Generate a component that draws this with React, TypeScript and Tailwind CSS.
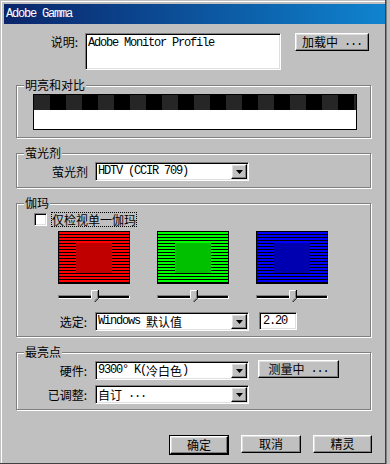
import React from "react";

const cjk = "font-['Noto_Sans_CJK_SC',sans-serif] text-[12px]";
const mono = "font-['Liberation_Mono','Noto_Sans_CJK_SC',monospace] text-[12px] tracking-[-1.2px]";

const raised =
  "bg-[#c0c0c0] border border-t-white border-l-white border-r-black border-b-black shadow-[inset_-1px_-1px_0_#808080,inset_1px_1px_0_#dfdfdf]";
const sunken =
  "bg-white border border-t-[#808080] border-l-[#808080] border-r-white border-b-white shadow-[inset_1px_1px_0_#000,inset_-1px_-1px_0_#dfdfdf]";

function Group({ title, className, children }: { title: string; className: string; children?: React.ReactNode }) {
  return (
    <div
      className={`relative ml-[12px] w-[355px] border border-[#808080] shadow-[inset_1px_1px_0_#fff,1px_1px_0_#fff] ${className}`}
    >
      <span className={`absolute left-[7px] top-[-10px] bg-[#c0c0c0] px-[1px] leading-[18px] text-black ${cjk}`}>
        {title}
      </span>
      {children}
    </div>
  );
}

function Button({ children, className = "" }: { children: React.ReactNode; className?: string }) {
  return (
    <div className={`flex h-[18px] items-center justify-center leading-[16px] text-black ${raised} ${className}`}>
      {children}
    </div>
  );
}

function Select({ children }: { children: React.ReactNode }) {
  return (
    <div className={`flex h-[19px] w-[154px] p-[1px] ${sunken}`}>
      <div className="flex flex-1 items-center overflow-hidden pl-[1px] leading-[15px] text-black">{children}</div>
      <div className={`flex w-[16px] items-center justify-center ${raised}`}>
        <svg width="7" height="4" viewBox="0 0 7 4">
          <path d="M0 0H7L3.5 4Z" fill="#000" />
        </svg>
      </div>
    </div>
  );
}

function Label({ text, w }: { text: string; w: string }) {
  return <div className={`${w} text-right leading-[19px] text-black ${cjk}`}>{text}</div>;
}

// gamma test patch: fine stripes around a solid middle
function Swatch({ line, inner }: { line: string; inner: string }) {
  const rows = [];
  for (let y = 1; y < 52; y += 3) {
    rows.push(<rect key={y} x="1" y={y + 2} width="70" height="1" fill="#000" />);
  }
  return (
    <svg width="72" height="53" viewBox="0 0 72 53" shapeRendering="crispEdges">
      <rect x="0" y="0" width="72" height="53" fill="#000" />
      <rect x="1" y="1" width="70" height="51" fill={line} />
      {rows}
      <rect x="18" y="12" width="36" height="30" fill={inner} />
    </svg>
  );
}

function Slider() {
  return (
    <div className="relative h-[12px] w-[72px]">
      <div className="mt-[5px] h-[4px] border border-t-[#808080] border-l-[#808080] border-r-white border-b-white bg-black" />
      <svg className="absolute left-[33px] top-0" width="8" height="12" viewBox="0 0 8 12">
        <path d="M0 0H7V8L3.5 11.5L0 8Z" fill="#c0c0c0" />
        <path d="M0.5 8V0.5H6.5" stroke="#fff" fill="none" />
        <path d="M7.5 0V8.2L3.7 12" stroke="#000" fill="none" />
        <path d="M6.5 1V7.8L3.6 10.8" stroke="#808080" fill="none" />
      </svg>
    </div>
  );
}

export default function App() {
  return (
    <div className="flex h-[464px] w-[390px] overflow-hidden bg-[#c0c0c0]">
      <div className="flex h-[464px] w-[386px] flex-col pl-[4px] pr-[1px] pt-[4px] shadow-[inset_-1px_-1px_0_#404040,inset_1px_1px_0_#c0c0c0,inset_2px_2px_0_#fff]">
        {/* title bar */}
        <div className="flex h-[20px] items-center bg-gradient-to-r from-[#0a246a] to-[#1084d0] pl-[2px]">
          <span className="font-['Liberation_Mono',monospace] text-[12px] leading-[14px] tracking-[-1.2px] text-white">
            Adobe Gamma
          </span>
        </div>

        {/* 说明 */}
        <div className="mt-[9px] flex items-start">
          <div className={`w-[74px] text-right leading-[18px] text-black ${cjk}`}>说明:</div>
          <div className={`ml-[7px] h-[37px] w-[196px] px-[2px] pt-[3px] leading-[12px] text-black ${mono} ${sunken}`}>
            Adobe Monitor Profile
          </div>
          <Button className="ml-[14px] w-[74px]">
            <span className={cjk}>加载中</span>
            <span className={mono}>&nbsp;...</span>
          </Button>
        </div>

        {/* 明亮和对比 */}
        <Group title="明亮和对比" className="mt-[15px] h-[53px] pl-[16px] pt-[8px]">
          <div className="flex h-[36px] w-[324px] flex-col border border-black bg-white">
            <div className="h-[15px] bg-[image:linear-gradient(90deg,#262626_50%,#000000_50%)] bg-[length:32px_100%]" />
          </div>
        </Group>

        {/* 萤光剂 */}
        <Group title="萤光剂" className="mt-[15px] flex h-[35px] items-start pt-[8px]">
          <Label text="萤光剂" w="w-[71px]" />
          <div className="ml-[7px]">
            <Select>
              <span className={mono}>HDTV (CCIR 709)</span>
            </Select>
          </div>
        </Group>

        {/* 伽玛 */}
        <Group title="伽玛" className="mt-[15px] flex h-[134px] flex-col pt-[8px]">
          <div className="ml-[17px] flex items-center">
            <div className={`h-[13px] w-[13px] ${sunken}`} />
            <div className={`ml-[4px] flex h-[15px] items-center border border-dotted border-black leading-[13px] text-black ${cjk}`}>
              仅检视单一伽玛
            </div>
          </div>
          <div className="ml-[41px] mt-[4px] flex gap-[27px]">
            <Swatch line="#ff0000" inner="#c00000" />
            <Swatch line="#00ff00" inner="#00c000" />
            <Swatch line="#0000ff" inner="#0000b0" />
          </div>
          <div className="ml-[41px] mt-[6px] flex gap-[27px]">
            <Slider />
            <Slider />
            <Slider />
          </div>
          <div className="mt-[10px] flex items-start">
            <Label text="选定:" w="w-[70px]" />
            <div className="ml-[8px]">
              <Select>
                <span className={mono}>Windows&nbsp;</span>
                <span className={cjk}>默认值</span>
              </Select>
            </div>
            <div className={`ml-[10px] h-[18px] w-[38px] pl-[3px] leading-[16px] text-black ${mono} ${sunken}`}>2.20</div>
          </div>
        </Group>

        {/* 最亮点 */}
        <Group title="最亮点" className="mt-[15px] flex h-[58px] flex-col pt-[8px]">
          <div className="flex items-start">
            <Label text="硬件:" w="w-[70px]" />
            <div className="ml-[8px]">
              <Select>
                <span className={mono}>9300° K(</span>
                <span className={cjk}>冷白色</span>
                <span className={mono}>)</span>
              </Select>
            </div>
            <Button className="ml-[9px] -mt-[1px] w-[81px]">
              <span className={cjk}>测量中</span>
              <span className={mono}>&nbsp;...</span>
            </Button>
          </div>
          <div className="mt-[5px] flex items-start">
            <Label text="已调整:" w="w-[70px]" />
            <div className="ml-[8px]">
              <Select>
                <span className={cjk}>自订</span>
                <span className={mono}>&nbsp;...</span>
              </Select>
            </div>
          </div>
        </Group>

        {/* buttons */}
        <div className="mt-[25px] flex">
          <div className="ml-[165px] w-[60px] border border-black">
            <Button className="h-[16px]">
              <span className={cjk}>确定</span>
            </Button>
          </div>
          <Button className="ml-[12px] w-[60px]">
            <span className={cjk}>取消</span>
          </Button>
          <Button className="ml-[12px] w-[59px]">
            <span className={cjk}>精灵</span>
          </Button>
        </div>
      </div>
      <div className="h-[464px] flex-1 border-l border-[#808080] bg-[#c0c0c0]" />
    </div>
  );
}
